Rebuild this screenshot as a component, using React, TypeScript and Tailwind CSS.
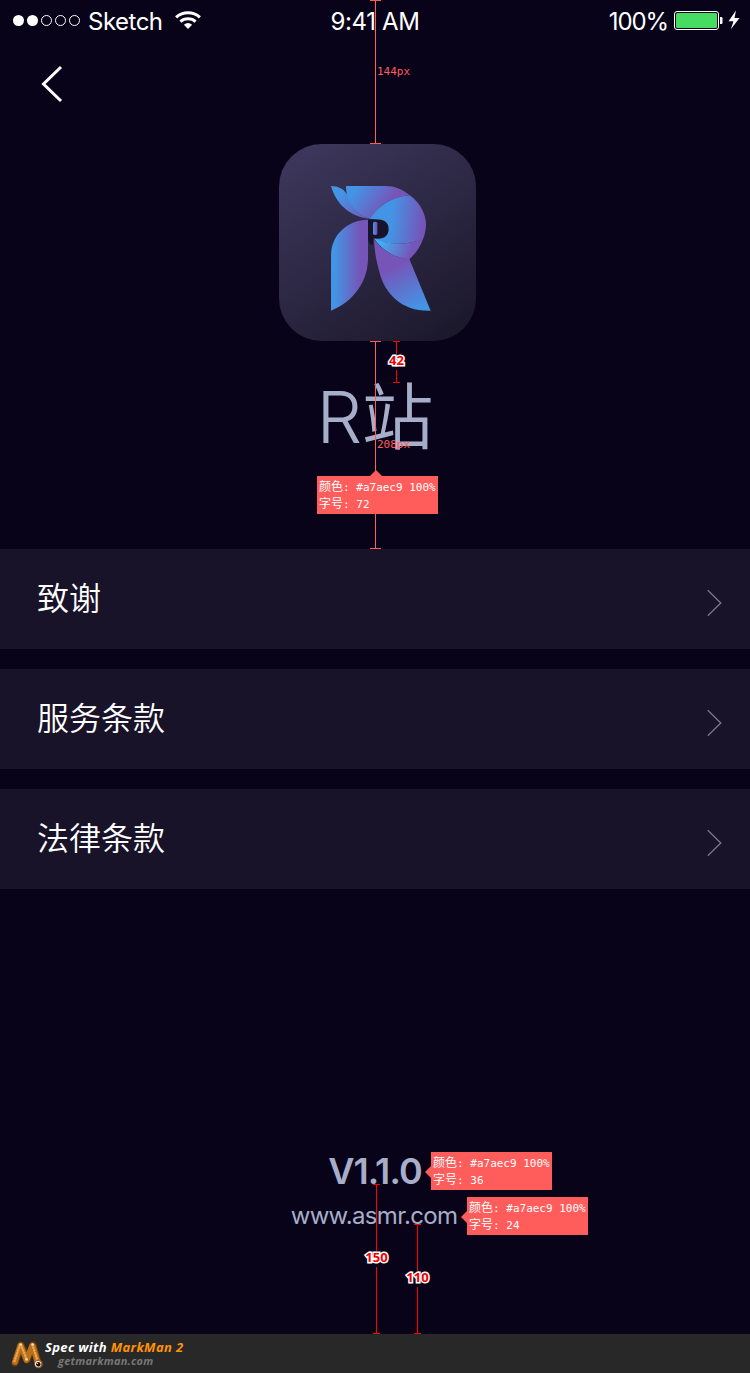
import React from "react";

const inter = "font-['Inter','Noto_Sans_CJK_SC',sans-serif]";
const cjk = "font-['Noto_Sans_CJK_SC',sans-serif]";
const mono = "font-['DejaVu_Sans_Mono','Noto_Sans_CJK_SC',monospace]";

function StatusBar() {
  return (
    <header className={`flex h-10 items-center text-white ${inter}`}>
      <div className="flex flex-1 items-center pl-[13px]">
        <svg width="68" height="12" viewBox="0 0 68 12" fill="none" stroke="white">
          <circle cx="5.5" cy="6.5" r="5.5" fill="white" stroke="none" />
          <circle cx="19.5" cy="6.5" r="5.5" fill="white" stroke="none" />
          <circle cx="33.5" cy="6.5" r="5" />
          <circle cx="47.5" cy="6.5" r="5" />
          <circle cx="61.5" cy="6.5" r="5" />
        </svg>
        <span className="ml-[7px] mt-[3px] w-[74px] whitespace-nowrap text-[24px] leading-[30px] tracking-[-0.5px]">Sketch</span>
        <svg className="ml-[13px]" width="26" height="18" viewBox="0 0 26 18" fill="none" stroke="white" strokeWidth="3">
          <path d="M1.1 6.4C7.8 .3 18.2 .3 24.9 6.4" />
          <path d="M5.4 10.7C9.7 6.9 16.3 6.9 20.6 10.7" />
          <path d="M8.9 13.8Q13 10.2 17.1 13.8L13 18Z" fill="white" stroke="none" />
        </svg>
      </div>
      <span className="mr-[4px] mt-[3px] whitespace-nowrap text-[24px] leading-[30px] tracking-[-0.35px]">9:41 AM</span>
      <div className="flex flex-1 items-center justify-end pr-[9px]">
        <span className="mt-[3px] whitespace-nowrap text-[24px] leading-[30px] tracking-[-1.1px]">100%</span>
        <svg className="ml-[6px]" width="67" height="22" viewBox="0 0 67 22">
          <rect x=".5" y="2.5" width="44" height="18" rx="2.5" fill="none" stroke="white" />
          <rect x="2" y="4" width="41" height="15" rx="1.5" fill="#47dc61" />
          <path d="M46 8h1.2q1.3 0 1.3 1.3v4.4q0 1.3-1.3 1.3H46z" fill="white" />
          <path d="M62 1.5 54.5 12.3h5l-2.7 8 8.7-11.3h-5z" fill="white" />
        </svg>
      </div>
    </header>
  );
}

function AppLogo() {
  return (
    <svg width="197" height="197" viewBox="27 27 591 591">
      <defs>
        <linearGradient id="tile" gradientUnits="userSpaceOnUse" x1="110" y1="50" x2="480" y2="618">
          <stop stopColor="#3c365a" /><stop offset="1" stopColor="#1d192d" />
        </linearGradient>
        <linearGradient id="leg"><stop offset=".1" stopColor="#4494e5" /><stop offset=".8" stopColor="#7654b8" /></linearGradient>
        <linearGradient id="feather" gradientUnits="userSpaceOnUse" x1="200" y1="170" x2="300" y2="250"><stop offset=".1" stopColor="#4494e5" /><stop offset="1" stopColor="#7654b8" /></linearGradient>
        <linearGradient id="crown" gradientUnits="userSpaceOnUse" x1="255" y1="165" x2="345" y2="225"><stop stopColor="#4494e5" /><stop offset="1" stopColor="#7654b8" /></linearGradient>
        <linearGradient id="head" gradientUnits="userSpaceOnUse" x1="365" y1="240" x2="462" y2="250"><stop stopColor="#4494e5" /><stop offset="1" stopColor="#7654b8" /></linearGradient>
        <linearGradient id="beak" gradientUnits="userSpaceOnUse" x1="325" y1="318" x2="425" y2="350"><stop stopColor="#3bb8f5" /><stop offset="1" stopColor="#7654b8" /></linearGradient>
        <linearGradient id="tail" gradientUnits="userSpaceOnUse" x1="370" y1="395" x2="435" y2="525"><stop stopColor="#7654b8" /><stop offset="1" stopColor="#4494e5" /></linearGradient>
      </defs>
      <rect x="27" y="27" width="591" height="591" rx="128" fill="url(#tile)" />
      <path d="M183 527V360C183 300 233 254 294 254V370C294 440 250 500 183 527Z" fill="url(#leg)" />
      <path d="M183 153C206 153 224 163 233 182C241 215 266 241 298 252C235 243 198 205 183 153Z" fill="url(#feather)" />
      <path d="M228 153H345C375 153 398 163 419 181C370 185 330 208 298 251C255 238 228 200 228 153Z" fill="url(#crown)" />
      <path d="M294 254H320C345 254 356 264 356 282C356 300 345 311 325 311H309V330C300 330 296 320 294 311Z" fill="#17132a" />
      <path d="M298 251C330 208 370 185 419 181C452 204 468 240 468 268C468 285 464 300 459 313C410 332 350 330 312 311H325C345 311 356 300 356 282C356 262 342 253 320 253Z" fill="url(#head)" />
      <path d="M312 310C350 330 410 332 459 312C452 335 435 357 418 373C375 370 335 345 312 310Z" fill="url(#beak)" />
      <path d="M312 312C335 345 375 370 418 372L482 527C400 530 345 480 328 410C318 375 313 345 312 312Z" fill="url(#tail)" />
      <rect x="309" y="260" width="13" height="40" rx="5" fill="url(#leg)" />
    </svg>
  );
}

function Row({ label }: { label: string }) {
  return (
    <div className="flex h-[100px] items-center justify-between bg-[#181329] pl-[37px] pr-[28px]">
      <span className={`-mt-[7px] text-[32px] leading-[48px] font-[350] text-white ${cjk}`}>{label}</span>
      <svg className="mt-[8px]" width="15" height="28" viewBox="0 0 15 28" fill="none" stroke="#7f7b89" strokeWidth="1.2">
        <path d="M.8 1.3 13.8 14 .8 26.7" />
      </svg>
    </div>
  );
}

function Ruler({ place, color, label }: { place: string; color: string; label?: React.ReactNode }) {
  return (
    <div className={`absolute flex flex-col items-center ${place} ${color}`}>
      <i className="h-px w-full bg-current" />
      <i className="w-px flex-1 bg-current" />
      {label}
      {label && <i className="w-px flex-1 bg-current" />}
      <i className="h-px w-full bg-current" />
    </div>
  );
}

function OutlinedNumber({ children }: { children: string }) {
  return (
    <b className="mb-[3px] font-['Open_Sans',sans-serif] text-[13px] leading-[13px] text-[#f00000] [-webkit-text-stroke:3px_white] [paint-order:stroke_fill]">
      {children}
    </b>
  );
}

function Tag({ place, size, arrow }: { place: string; size: string; arrow: string }) {
  return (
    <div className={`absolute h-[38px] w-[121px] whitespace-pre bg-[#ff5c5c] pl-[2px] pt-[3px] text-[11px] leading-[17px] text-white ${mono} ${place}`}>
      <i className={`absolute h-0 w-0 border-[6px] border-transparent ${arrow}`} />
      <div><span className="text-[12px]">颜色</span>: #a7aec9 100%</div>
      <div><span className="text-[12px]">字号</span>: {size}</div>
    </div>
  );
}

function Worm() {
  return (
    <svg width="32" height="29" viewBox="0 0 32 29" fill="none" strokeLinecap="round" strokeLinejoin="round">
      <path d="M4 23 10 5 16 20 22 5 27 23" stroke="#6d3c08" strokeWidth="7" />
      <path d="M4 22 9.5 5 15.5 20M16 19 21.5 5 26.5 22" stroke="#b96f1e" strokeWidth="6" strokeDasharray=".2 2.6" />
      <path d="M3.5 21 9 5M10 5 15.5 19M21.5 5 26 19" stroke="#e7a64d" strokeWidth="2.6" strokeDasharray=".2 2.6" />
      <circle cx="9.8" cy="4.5" r="1.2" fill="#ffe09a" />
      <circle cx="15.6" cy="19.5" r="1.2" fill="#ffe09a" />
      <circle cx="21.6" cy="4.5" r="1.2" fill="#ffe09a" />
      <circle cx="27.5" cy="24" r="4.2" fill="#a9641b" />
      <circle cx="27" cy="24" r="3" fill="#fff" />
      <circle cx="27.3" cy="24.2" r="2.2" fill="#111" />
      <circle cx="26.6" cy="23.6" r=".6" fill="#fff" />
    </svg>
  );
}

export default function App() {
  return (
    <div className="flex h-[1373px] w-[750px] flex-col overflow-hidden bg-[#09031a]">
      <main className="relative flex h-[1334px] flex-col">
        <StatusBar />
        <nav className="h-[104px] pl-[41px] pt-[25px]">
          <svg width="22" height="38" viewBox="0 0 22 38" fill="none" stroke="white" strokeWidth="3">
            <path d="M20 2 2.5 19 20 36" />
          </svg>
        </nav>
        <section className="flex h-[405px] flex-col items-center pl-[5px]">
          <AppLogo />
          <h1 className="mt-[18px] flex items-baseline whitespace-nowrap pr-[5px] text-[72px] leading-[106px] text-[#a7aec9]">
            <span className={`font-[350] tracking-[-0.5px] ${inter}`}>R</span>
            <span className={`font-[350] ${cjk}`}>站</span>
          </h1>
        </section>
        <section className="flex flex-col gap-5">
          <Row label="致谢" />
          <Row label="服务条款" />
          <Row label="法律条款" />
        </section>
        <footer className={`mt-[260px] flex flex-col items-center text-[#a7aec9] ${inter}`}>
          <p className="text-[36px] font-semibold leading-[44px] tracking-[-0.9px]">V1.1.0</p>
          <p className="mt-[8px] pr-[2px] text-[24px] leading-[30px] tracking-[-0.68px]">www.asmr.com</p>
        </footer>

        <Ruler place="left-[370px] top-0 h-[144px] w-[11px]" color="text-[#ff5c5c]" />
        <span className={`absolute left-[377px] top-[64px] text-[11px] leading-[15px] text-[#ff5c5c] ${mono}`}>144px</span>
        <Ruler place="left-[370px] top-[341px] h-[208px] w-[11px]" color="text-[#ff5c5c]" />
        <span className={`absolute left-[377px] top-[437px] text-[11px] leading-[15px] text-[#ff5c5c] ${mono}`}>208px</span>
        <Ruler place="left-[393px] top-[341px] h-[42px] w-[7px]" color="text-[#ff0000]" label={<OutlinedNumber>42</OutlinedNumber>} />
        <Ruler place="left-[373px] top-[1184px] h-[150px] w-[7px]" color="text-[#ff0000]" label={<OutlinedNumber>150</OutlinedNumber>} />
        <Ruler place="left-[414px] top-[1224px] h-[110px] w-[7px]" color="text-[#ff0000]" label={<OutlinedNumber>110</OutlinedNumber>} />
        <Tag place="left-[317px] top-[476px]" size="72" arrow="left-[53px] -top-[12px] border-b-[#ff5c5c]" />
        <Tag place="left-[431px] top-[1152px]" size="36" arrow="-left-[12px] top-[14px] border-r-[#ff5c5c]" />
        <Tag place="left-[467px] top-[1197px]" size="24" arrow="-left-[12px] top-[14px] border-r-[#ff5c5c]" />
      </main>
      <div className="flex h-[39px] items-start bg-[#282828] pl-[11px] pt-[6px]">
        <Worm />
        <div className="ml-[2px] whitespace-nowrap font-['Open_Sans',sans-serif] italic font-bold">
          <p className="text-[13px] leading-[15px] tracking-[0.35px] text-white">Spec with <span className="text-[#ff9203]">MarkMan 2</span></p>
          <p className="pl-[13px] text-[11px] leading-[11px] tracking-[0.25px] text-[#777]">getmarkman.com</p>
        </div>
      </div>
    </div>
  );
}
